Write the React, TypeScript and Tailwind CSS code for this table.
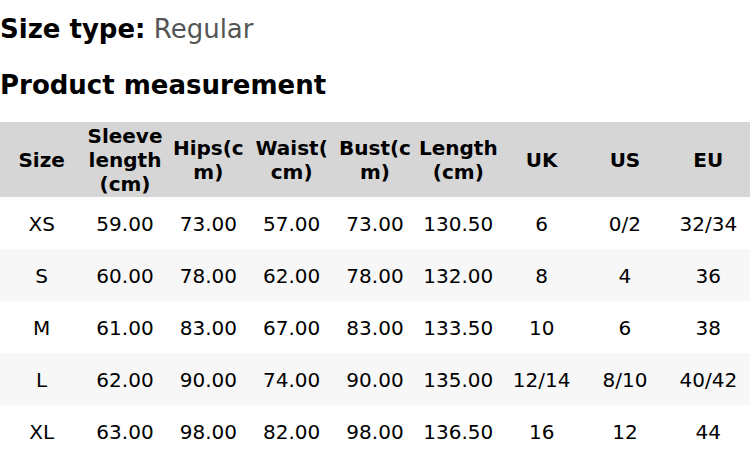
const headers = [
  ["Size"],
  ["Sleeve", "length", "(cm)"],
  ["Hips(c", "m)"],
  ["Waist(", "cm)"],
  ["Bust(c", "m)"],
  ["Length", "(cm)"],
  ["UK"],
  ["US"],
  ["EU"],
];

const rows = [
  ["XS", "59.00", "73.00", "57.00", "73.00", "130.50", "6", "0/2", "32/34"],
  ["S", "60.00", "78.00", "62.00", "78.00", "132.00", "8", "4", "36"],
  ["M", "61.00", "83.00", "67.00", "83.00", "133.50", "10", "6", "38"],
  ["L", "62.00", "90.00", "74.00", "90.00", "135.00", "12/14", "8/10", "40/42"],
  ["XL", "63.00", "98.00", "82.00", "98.00", "136.50", "16", "12", "44"],
];

export default function App() {
  return (
    <div className="w-[750px] h-[458px] overflow-hidden bg-white text-black font-['DejaVu_Sans',sans-serif]">
      <div className="pt-[14px]">
        <p className="text-[26px] leading-[30px]">
          <span className="font-bold">Size type:</span>{" "}
          <span className="text-[#555]">Regular</span>
        </p>
        <h2 className="mt-[26px] mb-[22px] text-[26px] leading-[30px] font-bold">
          Product measurement
        </h2>
      </div>
      <table className="w-full table-fixed border-collapse text-[20px]">
        <thead>
          <tr className="bg-[#d6d6d6] h-[75px]">
            {headers.map((h) => (
              <th
                key={h.join("")}
                className="px-[2px] text-center align-middle font-bold leading-[24px] whitespace-nowrap"
              >
                {h.map((line) => (
                  <div key={line}>{line}</div>
                ))}
              </th>
            ))}
          </tr>
        </thead>
        <tbody>
          {rows.map((r, i) => (
            <tr key={r[0]} className={i % 2 ? "bg-[#f7f7f7] h-[52px]" : "bg-white h-[52px]"}>
              {r.map((c, j) => (
                <td key={j} className="pt-[2px] text-center align-middle leading-[24px]">
                  {c}
                </td>
              ))}
            </tr>
          ))}
        </tbody>
      </table>
    </div>
  );
}
